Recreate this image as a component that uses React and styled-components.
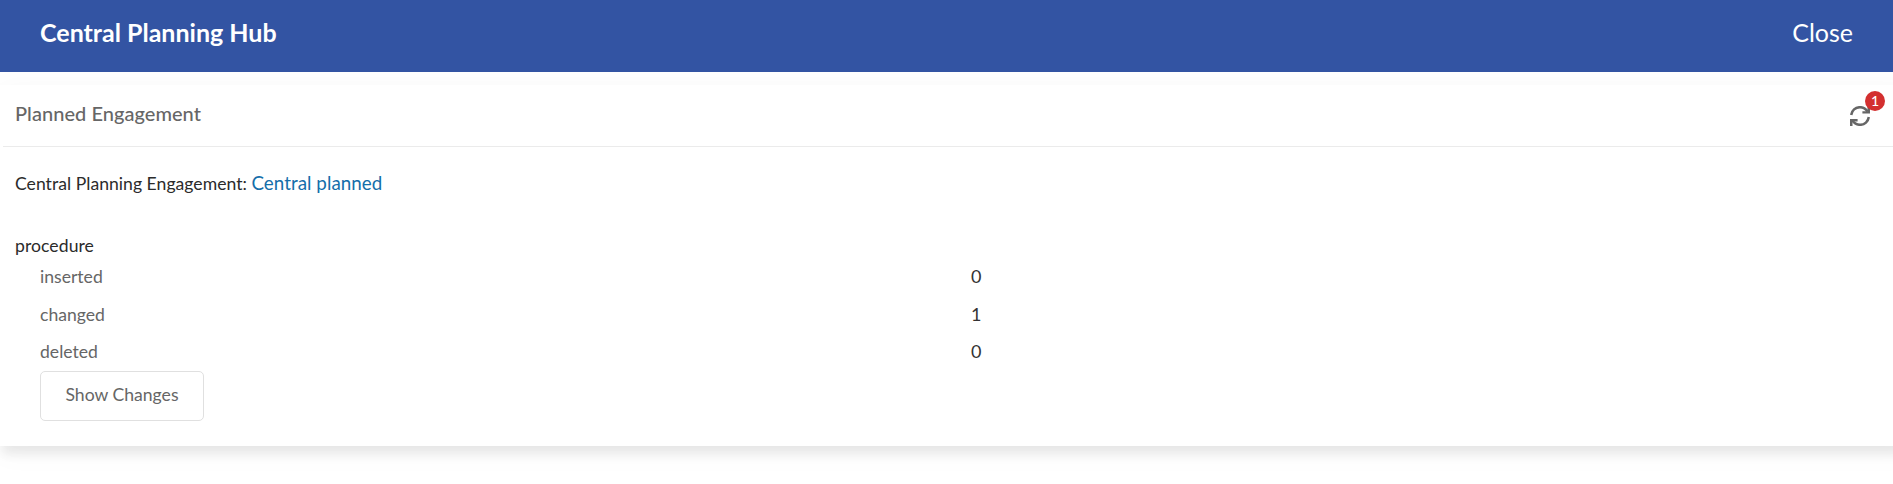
import React from 'react';
import styled, { createGlobalStyle } from 'styled-components';

const GlobalStyle = createGlobalStyle`
  * { box-sizing: border-box; }
  body {
    margin: 0;
    background: #fff;
    font-family: Lato, "Liberation Sans", sans-serif;
    font-size: 17.6px;
    line-height: 24px;
    color: #2b2b2b;
    overflow: hidden;
  }
`;

const TopBar = styled.header`
  display: flex;
  justify-content: space-between;
  align-items: flex-start;
  height: 72px;
  padding: 16px 40px 0 40px;
  background: #3354a3;
  color: #fff;
`;

const Title = styled.h1`
  margin: 0;
  font-size: 25px;
  line-height: 32px;
  font-weight: 700;
`;

const CloseButton = styled.button`
  padding: 0;
  border: 0;
  background: none;
  color: inherit;
  font: 400 25px/32px Lato, "Liberation Sans", sans-serif;
`;

const Content = styled.main`
  height: 412px;
  padding-top: 13px;
  overflow: hidden;
`;

const Card = styled.section`
  height: 361px;
  margin-right: -20px;
  padding-right: 20px;
  background: #fff;
  box-shadow: 0 10px 10px -2px rgba(0, 0, 0, 0.075), 0 5px 28px 2px rgba(0, 0, 0, 0.035);
`;

const CardHeader = styled.div`
  display: flex;
  justify-content: space-between;
  height: 62px;
  margin-left: 3px;
  padding: 15px 23px 0 12px;
  border-bottom: 1px solid #ebebeb;
`;

const CardTitle = styled.h2`
  margin: 0;
  font-size: 20px;
  letter-spacing: 0.04px;
  line-height: 26px;
  font-weight: 500;
  color: #666;
`;

const RefreshButton = styled.button`
  position: relative;
  width: 20px;
  height: 20px;
  margin-top: 6px;
  padding: 0;
  border: 0;
  background: none;
  color: #666;

  svg { display: block; }
`;

const Badge = styled.span`
  position: absolute;
  top: -15px;
  left: 15px;
  width: 20px;
  height: 20px;
  border-radius: 50%;
  background: #d32f2f;
  color: #fff;
  font: 500 14px/20px Lato, "Liberation Sans", sans-serif;
  text-align: center;
`;

const Details = styled.div`
  padding: 24px 15px 0;
`;

const Engagement = styled.p`
  margin: 0 0 38px;
  letter-spacing: 0.02px;
`;

const Link = styled.a`
  color: #146eaa;
  font-size: 18.8px;
  letter-spacing: 0.04px;
`;

const GroupName = styled.div`
  height: 24px;
  letter-spacing: 0.06px;
`;

const Counts = styled.dl`
  margin: 0;
  padding-left: 25px;
`;

const CountRow = styled.div`
  display: grid;
  grid-template-columns: 931px 1fr;
  height: 37.5px;
  padding-top: 7px;
`;

const CountLabel = styled.dt`
  color: #666;
`;

const CountValue = styled.dd`
  margin: 0;
  color: #333;
  font-size: 18px;
  line-height: 22px;
`;

const ShowChanges = styled.button`
  display: block;
  width: 164px;
  height: 50px;
  margin: 0 0 0 25px;
  padding: 0 0 2px;
  border: 1px solid #e0e0e0;
  border-radius: 5px;
  background: #fff;
  color: #666;
  font: 400 17.6px/24px Lato, "Liberation Sans", sans-serif;
`;

const RefreshIcon = () => (
  <svg width="20" height="20" viewBox="0 0 20 20" fill="none" stroke="currentColor" strokeWidth="2.5">
    <path d="M1.2 9C1.8 4.6 5.3 1.2 10 1.2c3.2 0 5.9 1.6 7.6 4.4" />
    <path d="M18.8 11c-.6 4.4-4.1 7.8-8.8 7.8-3.2 0-5.9-1.6-7.6-4.4" />
    <path d="M20 1v6.6h-7.6V5.2h5.1V1zM0 20v-7h7.6v2.5H2.5V20z" fill="currentColor" stroke="none" />
  </svg>
);

const counts = [
  ['inserted', 0],
  ['changed', 1],
  ['deleted', 0],
];

export default function App() {
  return (
    <>
      <GlobalStyle />
      <TopBar>
        <Title>Central Planning Hub</Title>
        <CloseButton>Close</CloseButton>
      </TopBar>
      <Content>
        <Card>
          <CardHeader>
            <CardTitle>Planned Engagement</CardTitle>
            <RefreshButton aria-label="Refresh">
              <RefreshIcon />
              <Badge>1</Badge>
            </RefreshButton>
          </CardHeader>
          <Details>
            <Engagement>
              Central Planning Engagement: <Link>Central planned</Link>
            </Engagement>
            <GroupName>procedure</GroupName>
            <Counts>
              {counts.map(([label, value]) => (
                <CountRow key={label}>
                  <CountLabel>{label}</CountLabel>
                  <CountValue>{value}</CountValue>
                </CountRow>
              ))}
            </Counts>
            <ShowChanges>Show Changes</ShowChanges>
          </Details>
        </Card>
      </Content>
    </>
  );
}
